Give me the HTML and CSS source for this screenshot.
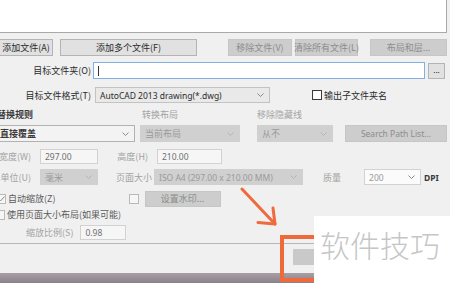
FILE: index.html
```html
<!DOCTYPE html>
<html lang="zh-CN">
<head>
    <meta charset="UTF-8">
    <title>批量转换</title>
    <link rel="stylesheet" href="styles.css">
</head>
<body>
    <div class="dialog">
        <div class="file-list"></div>

        <div class="row row-buttons">
            <div class="btn btn-add">添加文件(A)</div>
            <div class="btn btn-add-many">添加多个文件(F)</div>
            <div class="btn off btn-remove">移除文件(V)</div>
            <div class="btn off btn-clear">清除所有文件(L)</div>
            <div class="btn off btn-layers">布局和层...</div>
        </div>

        <div class="row row-folder">
            <div class="label wide">目标文件夹(O)</div>
            <div class="field focus folder-input"><span class="caret"></span></div>
            <div class="btn dots">...</div>
        </div>

        <div class="row row-format">
            <div class="label wide">目标文件格式(T)</div>
            <div class="select format-select">
                <span class="latin">AutoCAD 2013 drawing(*.dwg)</span>
                <svg class="chev" width="7" height="4" viewBox="0 0 7 4"><polyline points="0.5,0.5 3.5,3.5 6.5,0.5" /></svg>
            </div>
            <span class="box subfolder-box"></span>
            <span class="check-text">输出子文件夹名</span>
        </div>

        <div class="row row-titles">
            <span class="title title-rule">替换规则</span>
            <span class="title dim title-layout">转换布局</span>
            <span class="title dim title-hidden">移除隐藏线</span>
        </div>

        <div class="row row-selects">
            <div class="select rule-select">
                <span>直接覆盖</span>
                <svg class="chev" width="7" height="4" viewBox="0 0 7 4"><polyline points="0.5,0.5 3.5,3.5 6.5,0.5" /></svg>
            </div>
            <div class="select off layout-select">
                <span>当前布局</span>
                <svg class="chev" width="7" height="4" viewBox="0 0 7 4"><polyline points="0.5,0.5 3.5,3.5 6.5,0.5" /></svg>
            </div>
            <div class="select off hidden-select">
                <span>从不</span>
                <svg class="chev" width="7" height="4" viewBox="0 0 7 4"><polyline points="0.5,0.5 3.5,3.5 6.5,0.5" /></svg>
            </div>
            <div class="btn off search-btn latin">Search Path List...</div>
        </div>

        <div class="row row-size">
            <div class="label dim cell-a">宽度(W)</div>
            <div class="field plain w-input">297.00</div>
            <div class="label dim cell-b">高度(H)</div>
            <div class="field plain h-input">210.00</div>
        </div>

        <div class="row row-unit">
            <div class="label dim cell-a">单位(U)</div>
            <div class="select off unit-select">
                <span>毫米</span>
                <svg class="chev" width="7" height="4" viewBox="0 0 7 4"><polyline points="0.5,0.5 3.5,3.5 6.5,0.5" /></svg>
            </div>
            <div class="label dim cell-c">页面大小</div>
            <div class="select off page-select">
                <span class="latin">ISO A4 (297.00 x 210.00 MM)</span>
                <svg class="chev" width="7" height="4" viewBox="0 0 7 4"><polyline points="0.5,0.5 3.5,3.5 6.5,0.5" /></svg>
            </div>
            <span class="label dim quality">质量</span>
            <div class="select dpi-select">
                <span class="latin">200</span>
                <svg class="chev" width="7" height="4" viewBox="0 0 7 4"><polyline points="0.5,0.5 3.5,3.5 6.5,0.5" /></svg>
            </div>
            <span class="dpi latin">DPI</span>
        </div>

        <div class="row row-auto">
            <span class="box soft checked auto-box">
                <svg width="7" height="6" viewBox="0 0 7 6"><polyline points="0.5,3 2.5,5 6.5,0.5" /></svg>
            </span>
            <span class="check-text mid">自动缩放(Z)</span>
            <span class="box soft mark-box"></span>
            <div class="btn off mark-btn">设置水印...</div>
        </div>

        <div class="row row-usepage">
            <span class="box soft use-box"></span>
            <span class="check-text mid">使用页面大小布局(如果可能)</span>
        </div>

        <div class="row row-scale">
            <span class="label dim scale-label">缩放比例(S)</span>
            <div class="field plain scale-input">0.98</div>
        </div>

        <div class="separator"></div>
        <div class="footer"></div>
        <div class="taskbar"></div>

        <svg class="arrow" width="60" height="60" viewBox="0 0 60 60">
            <polyline points="2,8 35,43" />
            <polyline points="18,41.5 35,43 33,27" />
        </svg>
        <div class="ok-btn"></div>
        <div class="highlight"></div>
        <div class="watermark">软件技巧</div>
    </div>
</body>
</html>
```

FILE: styles.css
```css
body {
    margin: 0;
    background-color: #f0f0f0;
    font-family: "Noto Sans CJK SC", "Noto Sans", sans-serif;
    font-size: 9px;
    color: #2b2b2b;
}
.dialog {
    position: relative;
    width: 450px;
    height: 283px;
    overflow: hidden;
}
.latin {
    font-family: "Noto Sans", "Noto Sans CJK SC", sans-serif;
    font-size: 8.5px;
}
.file-list {
    width: 446px;
    height: 32px;
    background-color: #ffffff;
    border-right: 1px solid #a9a9a9;
    border-bottom: 1px solid #a9a9a9;
}
.row {
    display: flex;
    align-items: center;
}

/* buttons */
.btn {
    box-sizing: border-box;
    height: 17px;
    display: flex;
    align-items: center;
    justify-content: center;
    background-color: #e1e1e1;
    border: 1px solid #b4b4b4;
    white-space: nowrap;
}
.btn.off {
    background-color: #cdcdcd;
    border-color: #c6c6c6;
    color: #8c8c8c;
}
.row-buttons {
    margin-top: 6px;
}
.btn-add {
    width: 54px;
    margin-left: -1px;
}
.btn-add-many {
    width: 137px;
    margin-left: 7px;
}
.btn-remove {
    width: 64px;
    margin-left: 31px;
}
.btn-clear {
    width: 63px;
    margin-left: 3px;
}
.btn-layers {
    width: 77px;
    margin-left: 12px;
}

/* labels and fields */
.label {
    white-space: nowrap;
}
.label.wide {
    width: 93px;
    text-align: right;
    padding-right: 2px;
    box-sizing: border-box;
}
.dim {
    color: #a3a3a3;
}
.field {
    box-sizing: border-box;
    height: 16px;
    display: flex;
    align-items: center;
    padding-left: 4px;
    white-space: nowrap;
}
.field.focus {
    background-color: #ffffff;
    border: 1px solid #7fb2e0;
}
.field.plain {
    background-color: #f6f6f6;
    border: 1px solid #d2d2d2;
    color: #707070;
    font-family: "Noto Sans", sans-serif;
    font-size: 8.5px;
}
.caret {
    width: 1px;
    height: 10px;
    background-color: #333333;
}
.row-folder {
    margin-top: 6px;
}
.folder-input {
    width: 332px;
    height: 17px;
}
.dots {
    width: 17px;
    height: 16px;
    margin-left: 3px;
    font-size: 8px;
    padding-bottom: 3px;
}

/* selects */
.select {
    box-sizing: border-box;
    height: 17px;
    display: flex;
    align-items: center;
    justify-content: space-between;
    padding: 0 5px 0 4px;
    background-color: #f3f3f3;
    border: 1px solid #b2b2b2;
    white-space: nowrap;
}
.select.off {
    background-color: #d0d0d0;
    border-color: #d0d0d0;
    color: #9a9a9a;
}
.chev {
    flex: none;
    fill: none;
    stroke: #8a8a8a;
    stroke-width: 1;
}
.select.off .chev {
    stroke: #b5b5b5;
}
.row-format {
    margin-top: 8px;
}
.format-select {
    width: 175px;
    height: 16px;
    margin-left: 2px;
    background-color: #e9e9e9;
    border-color: #c3c3c3;
}

/* checkboxes */
.box {
    box-sizing: border-box;
    flex: none;
    width: 10px;
    height: 10px;
    border: 1px solid #3a3a3a;
    background-color: #ffffff;
    display: flex;
    align-items: center;
    justify-content: center;
}
.box.soft {
    border-color: #b9b9b9;
    background-color: #f6f6f6;
}
.box svg {
    fill: none;
    stroke: #8a8a8a;
    stroke-width: 1;
}
.check-text {
    margin-left: 2px;
    white-space: nowrap;
}
.check-text.mid {
    color: #5a5a5a;
}
.subfolder-box {
    margin-left: 42px;
}

/* replace rule titles */
.row-titles {
    margin-top: 5px;
    height: 12px;
}
.title {
    white-space: nowrap;
}
.title-rule {
    margin-left: -3px;
    font-weight: 700;
    color: #3a3a3a;
}
.title-layout {
    margin-left: 109px;
}
.title-hidden {
    margin-left: 79px;
}
.row-selects {
    margin-top: 5px;
}
.rule-select {
    width: 145px;
    margin-left: -10px;
    padding-left: 9px;
    font-weight: 700;
    color: #3a3a3a;
}
.layout-select {
    width: 100px;
    margin-left: 5px;
}
.hidden-select {
    width: 76px;
    margin-left: 17px;
}
.search-btn {
    width: 102px;
    margin-left: 12px;
}

/* size rows */
.row-size {
    margin-top: 7px;
}
.cell-a {
    width: 50px;
    margin-left: -10px;
    text-align: right;
    padding-right: 9px;
    box-sizing: border-box;
}
.cell-b {
    width: 59px;
    text-align: right;
    padding-right: 9px;
    box-sizing: border-box;
}
.cell-c {
    width: 56px;
    text-align: right;
    padding-right: 2px;
    box-sizing: border-box;
}
.w-input {
    width: 58px;
    height: 15px;
}
.h-input {
    width: 65px;
    height: 15px;
}
.row-unit {
    margin-top: 5px;
}
.unit-select {
    width: 58px;
    height: 16px;
    color: #7a7a7a;
}
.page-select {
    width: 149px;
    height: 16px;
    color: #808080;
}
.quality {
    margin-left: 20px;
}
.dpi-select {
    width: 57px;
    height: 16px;
    margin-left: 23px;
    background-color: #fbfbfb;
    border-color: #d2d2d2;
    color: #9a9a9a;
}
.dpi {
    margin-left: 3px;
    font-weight: 700;
    color: #3a3a3a;
}

/* scaling options */
.row-auto {
    margin-top: 5px;
    height: 17px;
}
.auto-box {
    margin-left: -4px;
}
.mark-box {
    margin-left: 73px;
}
.mark-btn {
    width: 76px;
    height: 16px;
    margin-left: 6px;
}
.row-usepage {
    margin-top: 1px;
    height: 13px;
}
.use-box {
    margin-left: -5px;
}
.row-scale {
    margin-top: 4px;
}
.scale-label {
    margin-left: 26px;
}
.scale-input {
    width: 46px;
    height: 15px;
    margin-left: 7px;
}
.separator {
    margin-top: 3px;
    height: 1px;
    background-color: #b7b7b7;
}
.footer {
    height: 29px;
}
.taskbar {
    height: 12px;
    background: linear-gradient(#a89ea5, #857b83);
}

/* overlays */
.arrow {
    position: absolute;
    left: 240px;
    top: 181px;
    fill: none;
    stroke: #ef6b3d;
    stroke-width: 3;
    stroke-linecap: round;
    stroke-linejoin: round;
}
.ok-btn {
    position: absolute;
    left: 293px;
    top: 249px;
    width: 30px;
    height: 16px;
    background-color: #c9c9c9;
}
.highlight {
    position: absolute;
    left: 280px;
    top: 235px;
    width: 60px;
    height: 39px;
    border: 4px solid #ee6a3b;
}
.watermark {
    position: absolute;
    left: 314px;
    top: 216px;
    width: 136px;
    height: 67px;
    background-color: #ffffff;
    color: #c6c6c6;
    font-size: 30px;
    font-weight: 300;
    line-height: 56px;
    padding-left: 6px;
    box-sizing: border-box;
    white-space: nowrap;
}
```
